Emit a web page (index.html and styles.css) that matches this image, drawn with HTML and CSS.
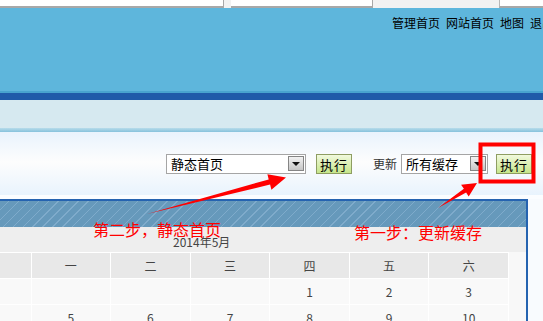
FILE: index.html
```html
<!DOCTYPE html>
<html lang="zh-CN">

<head>
  <meta charset="UTF-8">
  <title>管理首页</title>
  <link rel="stylesheet" href="styles.css">
</head>

<body>
  <div class="page">
    <!-- browser strip -->
    <div class="topbar">
      <div class="box box-a"></div>
      <div class="box box-b"></div>
      <div class="box-gap"></div>
      <div class="box box-c"></div>
    </div>

    <!-- header -->
    <div class="header">
      <div class="nav">
        <a href="#">管理首页</a>
        <a href="#">网站首页</a>
        <a href="#">地图</a>
        <a href="#">退出</a>
      </div>
    </div>
    <div class="stripe-light"></div>
    <div class="stripe-dark"></div>
    <div class="subbar"></div>
    <div class="subbar-line"></div>

    <!-- toolbar -->
    <div class="toolbar">
      <div class="select select-wide">
        <span class="select-text">静态首页</span>
        <span class="select-arrow"></span>
      </div>
      <button class="btn-run">执行</button>
      <span class="label">更新</span>
      <div class="select select-narrow">
        <span class="select-text">所有缓存</span>
        <span class="select-arrow"></span>
      </div>
      <button class="btn-run btn-last">执行</button>
    </div>

    <!-- calendar panel -->
    <div class="panel">
      <div class="panel-head"></div>
      <div class="cal-title">2014年5月</div>
      <table class="calendar">
        <tr>
          <th>日</th><th>一</th><th>二</th><th>三</th><th>四</th><th>五</th><th>六</th>
        </tr>
        <tr>
          <td class="empty"></td><td class="empty"></td><td class="empty"></td><td class="empty"></td>
          <td>1</td><td>2</td><td>3</td>
        </tr>
        <tr>
          <td>4</td><td>5</td><td>6</td><td>7</td><td>8</td><td>9</td><td>10</td>
        </tr>
      </table>
    </div>

    <!-- annotations -->
    <svg class="marks" width="543" height="321" viewBox="0 0 543 321">
      <polygon points="147,214 268.7,179.4 267.4,174.2 286,177.5 271.4,189.8 270.1,184.6" fill="#ff0000" />
      <polygon points="438,208 463.9,188.8 461.1,184.8 477,183 468.7,196.6 466.1,192.6" fill="#ff0000" />
      <rect x="480.5" y="144.5" width="53" height="37" fill="none" stroke="#ff0000" stroke-width="4" />
    </svg>
    <div class="note note-two">第二步，静态首页</div>
    <div class="note note-one">第一步：更新缓存</div>
  </div>
</body>

</html>
```

FILE: styles.css
```css
html,
body {
  margin: 0;
  padding: 0;
  overflow: hidden;
}

body {
  font-family: "Noto Sans CJK SC", "Liberation Sans", sans-serif;
  font-size: 12px;
  color: #000000;
  background-color: #f8fbfe;
}

.page {
  position: relative;
  width: 543px;
  height: 321px;
  overflow: hidden;
}

/* Browser strip */
.topbar {
  display: flex;
  height: 8px;
  background-color: #f2f2f2;
}

.topbar .box {
  height: 6px;
  background-color: #ffffff;
  border-bottom: 2px solid #a8a8a8;
}

.box-a {
  width: 223px;
  border-right: 1px solid #a8a8a8;
}

.box-b {
  width: 141px;
  margin-left: 7px;
  border-right: 1px solid #a8a8a8;
}

.box-gap {
  width: 126px;
}

.box-c {
  flex: 1;
  border-left: 1px solid #b8b8b8;
}

/* Header */
.header {
  height: 83px;
  background-color: #5eb6dc;
}

.nav {
  display: flex;
  gap: 6px;
  padding: 6px 0 0 392px;
  white-space: nowrap;
  line-height: 17px;
  font-size: 12px;
}

.nav a {
  color: #000000;
  text-decoration: none;
}

.stripe-light {
  height: 2px;
  background-color: #48a4cf;
}

.stripe-dark {
  height: 7px;
  background-color: #1f5ba9;
}

.subbar {
  height: 28px;
  background-color: #d6e9f0;
}

.subbar-line {
  height: 4px;
  background: linear-gradient(#b8dcea, #86c2dc);
}

/* Toolbar */
.toolbar {
  display: flex;
  align-items: center;
  height: 63px;
  padding: 0 11px 4px 0;
  justify-content: flex-end;
  background: linear-gradient(#e9f3fd, #fdfdfd 45%, #e8f3fd 95%);
  box-shadow: inset 0 -4px 0 #fbfdff;
}

.select {
  display: flex;
  align-items: center;
  justify-content: space-between;
  box-sizing: border-box;
  height: 20px;
  padding: 0 1px 0 4px;
  background-color: #ffffff;
  border: 1px solid #a5a5a5;
}

.select-wide {
  width: 140px;
}

.select-narrow {
  width: 87px;
}

.select-text {
  font-size: 13px;
  line-height: 18px;
}

.select-arrow {
  position: relative;
  box-sizing: border-box;
  width: 16px;
  height: 15px;
  background: linear-gradient(#f2f2f2, #c6c6c6);
  border: 1px solid #858585;
}

.select-arrow::after {
  content: "";
  position: absolute;
  left: 3px;
  top: 5px;
  border-left: 4px solid transparent;
  border-right: 4px solid transparent;
  border-top: 4px solid #111111;
}

.btn-run {
  box-sizing: border-box;
  width: 36px;
  height: 20px;
  margin-left: 10px;
  padding: 0;
  font-family: inherit;
  font-size: 13px;
  letter-spacing: 1px;
  color: #000000;
  background: linear-gradient(#f1f9de, #c6e68a);
  border: 1px solid #8e9d62;
  cursor: pointer;
}

.btn-last {
  margin-left: 8px;
}

.label {
  margin: 0 4px 0 21px;
  font-size: 12px;
  color: #333333;
}

/* Calendar panel */
.panel {
  margin-right: 15px;
  overflow: hidden;
  background-color: #f8f8f8;
  border-top: 2px solid #2563b0;
  border-right: 2px solid #2563b0;
}

.panel-head {
  height: 26px;
  background: repeating-linear-gradient(135deg, #6699bb 0 6px, #7fabcb 6px 7px);
}

.cal-title {
  height: 25px;
  padding-left: 173px;
  line-height: 30px;
  font-size: 12px;
  color: #444444;
  background-color: #eeeeee;
}

.calendar {
  table-layout: fixed;
  width: 558px;
  margin-left: -49px;
  border-collapse: separate;
  border-spacing: 1px;
  background-color: #ffffff;
  color: #444444;
  font-size: 12px;
}

.calendar th,
.calendar td {
  width: 78px;
  height: 25px;
  padding: 0;
  text-align: center;
  font-weight: normal;
}

.calendar th {
  background-color: #e8e8e8;
}

.calendar td {
  background-color: #f9f9f9;
}

/* Annotations */
.marks {
  position: absolute;
  left: 0;
  top: 0;
}

.note {
  position: absolute;
  font-size: 16px;
  line-height: 18px;
  color: #ff0000;
  white-space: nowrap;
}

.note-two {
  left: 93px;
  top: 220px;
}

.note-one {
  left: 354px;
  top: 223px;
}
```
